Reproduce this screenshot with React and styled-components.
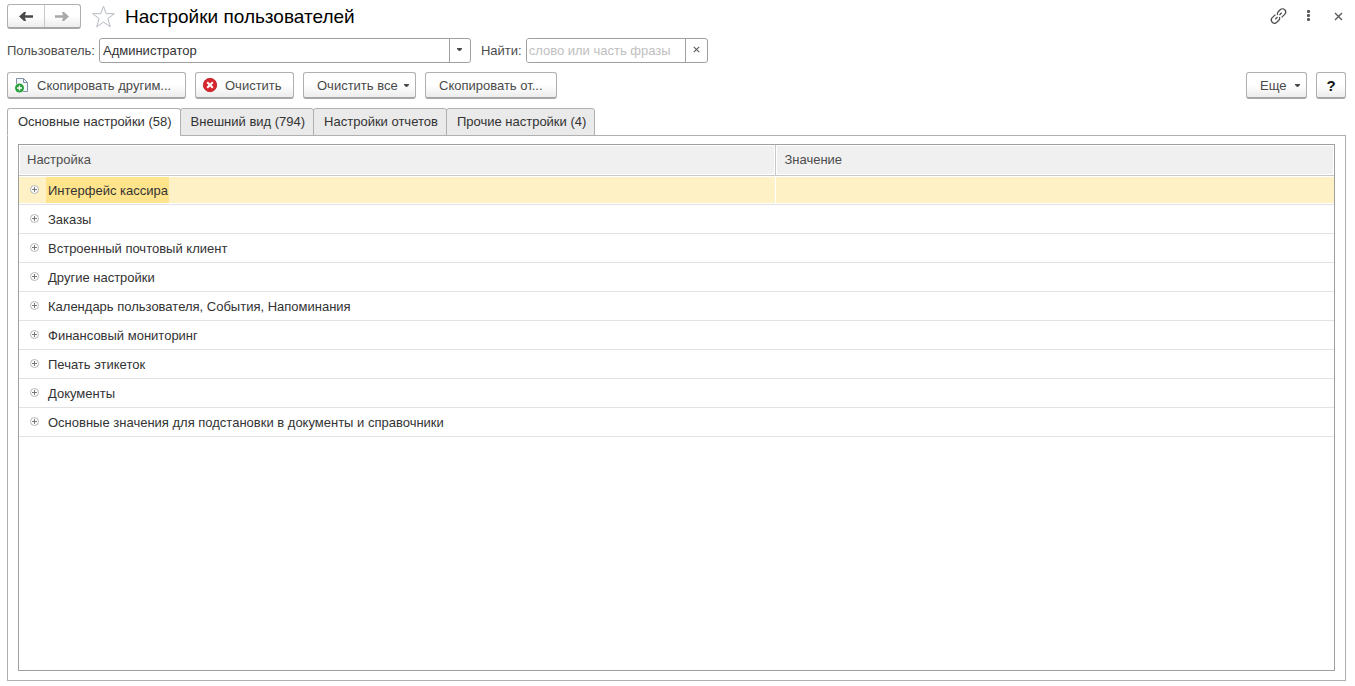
import React, { useState } from 'react';
import styled, { createGlobalStyle } from 'styled-components';

const tabs = [
    'Основные настройки (58)',
    'Внешний вид (794)',
    'Настройки отчетов',
    'Прочие настройки (4)',
];

const settings = [
    'Интерфейс кассира',
    'Заказы',
    'Встроенный почтовый клиент',
    'Другие настройки',
    'Календарь пользователя, События, Напоминания',
    'Финансовый мониторинг',
    'Печать этикеток',
    'Документы',
    'Основные значения для подстановки в документы и справочники',
];

function App() {
    const [activeTab, setActiveTab] = useState(0);
    const [selected, setSelected] = useState(0);
    const [search, setSearch] = useState('');

    return (
        <>
        <GlobalStyle />
        <SCPage>
            <SCHeader>
                <SCHistory>
                    <SCHistoryButton type="button" aria-label="Назад"><ArrowIcon color="#4a4a4a" /></SCHistoryButton>
                    <SCHistoryButton type="button" aria-label="Вперед"><ArrowIcon color="#a8a8a8" flip /></SCHistoryButton>
                </SCHistory>
                <SCIconButton type="button" aria-label="В избранное"><StarIcon /></SCIconButton>
                <SCTitle>Настройки пользователей</SCTitle>
                <SCWindowButtons>
                    <SCIconButton type="button" aria-label="Ссылка"><LinkIcon /></SCIconButton>
                    <SCIconButton type="button" aria-label="Меню"><DotsIcon /></SCIconButton>
                    <SCIconButton type="button" aria-label="Закрыть"><CrossIcon size={9} /></SCIconButton>
                </SCWindowButtons>
            </SCHeader>

            <SCFilters>
                <SCLabel htmlFor="user">Пользователь:</SCLabel>
                <SCField $width="372px">
                    <SCSelect id="user" defaultValue="admin">
                        <option value="admin">Администратор</option>
                    </SCSelect>
                    <SCSelectArrow><CaretIcon /></SCSelectArrow>
                </SCField>
                <SCLabel htmlFor="search" $spaced>Найти:</SCLabel>
                <SCField $width="182px">
                    <SCInput
                        id="search"
                        type="text"
                        placeholder="слово или часть фразы"
                        value={search}
                        onChange={(e) => setSearch(e.target.value)}
                    />
                    <SCFieldButton type="button" aria-label="Очистить поиск" onClick={() => setSearch('')}>
                        <CrossIcon size={7} />
                    </SCFieldButton>
                </SCField>
            </SCFilters>

            <SCCommands>
                <SCButton type="button" $width="179px" $icon><CopyIcon />Скопировать другим...</SCButton>
                <SCButton type="button" $width="99px" $icon><ClearIcon />Очистить</SCButton>
                <SCButton type="button" $width="113px" $menu>Очистить все<CaretIcon /></SCButton>
                <SCButton type="button" $width="132px">Скопировать от...</SCButton>
                <SCSpacer />
                <SCButton type="button" $width="61px" $menu>Еще<CaretIcon /></SCButton>
                <SCHelpButton type="button">?</SCHelpButton>
            </SCCommands>

            <SCTabs role="tablist">
                {tabs.map((tab, i) => (
                    <SCTab
                        key={tab}
                        type="button"
                        role="tab"
                        aria-selected={activeTab === i}
                        $active={activeTab === i}
                        onClick={() => setActiveTab(i)}
                    >
                        {tab}
                    </SCTab>
                ))}
            </SCTabs>

            <SCPanel role="tabpanel">
                <SCTableBox>
                    <SCTable>
                        <thead>
                            <tr>
                                <SCTh $width="57.6%">Настройка</SCTh>
                                <SCTh>Значение</SCTh>
                            </tr>
                        </thead>
                        <tbody>
                            {settings.map((name, i) => (
                                <SCRow key={name} $selected={selected === i} onClick={() => setSelected(i)}>
                                    <td>
                                        <SCNode>
                                            <SCExpand type="button" aria-label={`Развернуть: ${name}`}><PlusIcon /></SCExpand>
                                            <SCName $selected={selected === i}>{name}</SCName>
                                        </SCNode>
                                    </td>
                                    <td />
                                </SCRow>
                            ))}
                        </tbody>
                    </SCTable>
                </SCTableBox>
            </SCPanel>
        </SCPage>
        </>
    );
}

function ArrowIcon({ color, flip }) {
    return (
        <svg width="14" height="12" viewBox="0 0 14 12" aria-hidden="true">
            <g transform={flip ? 'translate(14 0) scale(-1 1)' : undefined}>
                <path d="M0 6.5L5 2H7L6 5.2H14V7.8H6L7 11H5Z" fill={color} />
            </g>
        </svg>
    );
}

function StarIcon() {
    return (
        <svg width="24" height="24" viewBox="0 0 24 24" aria-hidden="true">
            <path
                d="M12.5 1.2L15.2 8.7H23.3L16.9 13.6L19.3 21.8L12.5 17L5.7 21.8L8.1 13.6L1.7 8.7H9.8Z"
                fill="#fff"
                stroke="#b3bac2"
            />
        </svg>
    );
}

function LinkIcon() {
    return (
        <svg width="18" height="18" viewBox="0 0 18 18" overflow="visible" aria-hidden="true">
            <g transform="translate(0.5 -0.5) rotate(-45 9 8.5)" fill="none" stroke="#4a4a4a" strokeWidth="1.2">
                <path d="M7.8 5.3H3.4A3.2 3.2 0 0 0 3.4 11.7H6.2Q8.4 11.7 8.8 9.8" />
                <path d="M10.2 11.7H14.6A3.2 3.2 0 0 0 14.6 5.3H11.8Q9.6 5.3 9.2 7.2" />
                <path d="M4.4 8.5H7.6M10.4 8.5H13.6" />
            </g>
        </svg>
    );
}

function DotsIcon() {
    return (
        <svg width="18" height="18" viewBox="0 0 18 18" fill="#5a5a5a" aria-hidden="true">
            <rect x="8" y="2" width="3" height="3" rx="1" />
            <rect x="8" y="6" width="3" height="3" rx="1" />
            <rect x="8" y="10" width="3" height="3" rx="1" />
        </svg>
    );
}

function CrossIcon({ size }) {
    return (
        <svg width={size} height={size} viewBox="0 0 9 9" aria-hidden="true">
            <path d="M1 1L8 8M8 1L1 8" stroke="#5a5a5a" strokeWidth="1.4" />
        </svg>
    );
}

function CaretIcon() {
    return (
        <svg width="5" height="3" viewBox="0 0 5 3" aria-hidden="true">
            <path d="M0 0H5V1L3 3H2L0 1Z" fill="#4a4a4a" />
        </svg>
    );
}

function CopyIcon() {
    return (
        <svg width="16" height="16" viewBox="0 0 16 16" aria-hidden="true">
            <path d="M2.5 1.5H9.5L13.5 5.5V14.5H2.5Z" fill="#f4f7fa" stroke="#7d90a5" />
            <path d="M9.5 1.5V5.5H13.5" fill="none" stroke="#7d90a5" />
            <circle cx="5.5" cy="11" r="5" fill="#fff" />
            <circle cx="5.5" cy="11" r="4.5" fill="#2aa03c" />
            <path d="M5.5 8.5V13.5M3 11H8" stroke="#fff" strokeWidth="1.4" />
        </svg>
    );
}

function ClearIcon() {
    return (
        <svg width="16" height="16" viewBox="0 0 16 16" aria-hidden="true">
            <circle cx="8" cy="8" r="6.7" fill="#d8262f" stroke="#b81c24" strokeWidth="0.8" />
            <path d="M5.2 5.2L10.8 10.8M10.8 5.2L5.2 10.8" stroke="#fff" strokeWidth="2" />
        </svg>
    );
}

function PlusIcon() {
    return (
        <svg width="9" height="9" viewBox="0 0 9 9" aria-hidden="true">
            <circle cx="4.5" cy="4.5" r="4" fill="#fff" stroke="#b4b4b4" />
            <path d="M4.5 2V7M2 4.5H7" stroke="#777" />
        </svg>
    );
}

const GlobalStyle = createGlobalStyle`
    * {
        box-sizing: border-box;
    }

    body {
        margin: 0;
        background-color: #fff;
    }

    body, button, input, select {
        font-family: 'Liberation Sans', Arial, sans-serif;
        font-size: 13px;
        color: #333;
    }
`;

const SCPage = styled.div`
    min-height: 100vh;
    display: flex;
    flex-direction: column;
    padding: 4px 9px 5px 7px;
`;

const SCHeader = styled.header`
    display: flex;
    align-items: center;
    height: 25px;
`;

const SCHistory = styled.div`
    display: flex;
    width: 74px;
    height: 25px;
    margin-right: 10px;
    border: 1px solid #b0b0b0;
    border-bottom: 2px solid #a6a6a6;
    border-radius: 3px;
    background: linear-gradient(#fff 50%, #ececec);
`;

const SCHistoryButton = styled.button`
    flex: 1;
    display: flex;
    align-items: center;
    justify-content: center;
    padding: 0;
    border: none;
    background: none;

    & + & {
        border-left: 1px solid #c8c8c8;
    }
`;

const SCIconButton = styled.button`
    display: flex;
    align-items: center;
    justify-content: center;
    min-width: 18px;
    height: 24px;
    padding: 0;
    border: none;
    background: none;
`;

const SCTitle = styled.h1`
    margin: 0 0 0 10px;
    font-size: 19px;
    font-weight: 400;
    line-height: 24px;
    color: #000;
`;

const SCWindowButtons = styled.div`
    display: flex;
    gap: 12px;
    margin-left: auto;
    margin-right: -1px;
`;

const SCFilters = styled.div`
    display: flex;
    align-items: center;
    margin-top: 9px;
`;

const SCLabel = styled.label`
    margin-left: ${(props) => (props.$spaced ? '10px' : '0')};
    margin-right: 4px;
    color: #4d4d4d;
`;

const SCField = styled.div`
    position: relative;
    display: flex;
    width: ${(props) => props.$width};
    height: 25px;
    border: 1px solid #a0a0a0;
    border-radius: 3px;
    overflow: hidden;
`;

const SCSelect = styled.select`
    flex: 1;
    appearance: none;
    padding: 0 24px 0 3px;
    border: none;
    outline: none;
    background: none;
`;

const SCSelectArrow = styled.span`
    position: absolute;
    top: 0;
    right: 0;
    bottom: 0;
    width: 21px;
    display: flex;
    align-items: center;
    justify-content: center;
    padding-bottom: 2px;
    border-left: 1px solid #a0a0a0;
    pointer-events: none;
`;

const SCInput = styled.input`
    flex: 1;
    min-width: 0;
    padding: 0 2px;
    border: none;
    outline: none;

    &::placeholder {
        color: #c0c0c0;
    }
`;

const SCFieldButton = styled.button`
    width: 22px;
    display: flex;
    align-items: center;
    justify-content: center;
    padding: 0 0 2px;
    border: none;
    border-left: 1px solid #a0a0a0;
    background: none;
`;

const SCCommands = styled.div`
    display: flex;
    gap: 9px;
    margin-top: 9px;
`;

const SCButton = styled.button`
    display: flex;
    align-items: center;
    justify-content: ${(props) => (props.$menu ? 'space-between' : 'flex-start')};
    gap: ${(props) => (props.$menu ? '4px' : '7px')};
    min-width: ${(props) => props.$width};
    height: 27px;
    padding: 0 6px 0 ${(props) => (props.$icon ? '6px' : '13px')};
    border: 1px solid #b0b0b0;
    border-bottom: 2px solid #a6a6a6;
    border-radius: 3px;
    background: linear-gradient(#fff 50%, #ececec);
    color: #4a4a4a;
    white-space: nowrap;
`;

const SCHelpButton = styled(SCButton)`
    justify-content: center;
    width: 30px;
    padding: 0;
    font-size: 15px;
    font-weight: 700;
    color: #111;
`;

const SCSpacer = styled.div`
    flex: 1;
`;

const SCTabs = styled.div`
    display: flex;
    margin-top: 9px;
`;

const SCTab = styled.button`
    height: 28px;
    margin-bottom: -1px;
    margin-right: -1px;
    padding: 0 8px 2px 10px;
    border: 1px solid #b0b0b0;
    border-bottom-color: ${(props) => (props.$active ? '#fff' : '#b0b0b0')};
    border-radius: 3px 3px 0 0;
    background-color: ${(props) => (props.$active ? '#fff' : '#eaeaea')};
    white-space: nowrap;
    z-index: 1;
`;

const SCPanel = styled.div`
    flex: 1;
    display: flex;
    padding: 8px 10px 9px;
    border: 1px solid #b0b0b0;
`;

const SCTableBox = styled.div`
    flex: 1;
    border: 1px solid #a0a0a0;
`;

const SCTable = styled.table`
    width: 100%;
    table-layout: fixed;
    border-collapse: separate;
    border-spacing: 0;
`;

const SCTh = styled.th`
    width: ${(props) => props.$width || 'auto'};
    height: 31px;
    padding: 0 8px 2px;
    border-bottom: 1px solid #c8c8cc;
    background-color: #f0f0f0;
    box-shadow: inset 0 0 0 1px #fff;
    color: #4d4d4d;
    font-weight: 400;
    text-align: left;

    &:first-child {
        border-right: 1px solid #c8c8cc;
    }
`;

const SCRow = styled.tr`
    td {
        height: 29px;
        padding: 1px 0;
        border-bottom: 1px solid #e2e2e2;
        background-color: ${(props) => (props.$selected ? '#fdf1c5' : '#fff')};
        box-shadow: inset 0 1px #fff, inset 0 -1px #fff;
    }

    td:first-child {
        box-shadow: inset 0 1px #fff, inset 0 -1px #fff, inset -1px 0 #fff;
    }
`;

const SCNode = styled.div`
    display: flex;
    align-items: center;
    gap: 7px;
    height: 26px;
    padding-left: 11px;
`;

const SCExpand = styled.button`
    display: flex;
    padding: 0 0 2px;
    border: none;
    background: none;
`;

const SCName = styled.span`
    height: 26px;
    padding: 1px 1px 0 2px;
    line-height: 26px;
    background-color: ${(props) => (props.$selected ? '#ffe48c' : 'transparent')};
`;

export default App;
